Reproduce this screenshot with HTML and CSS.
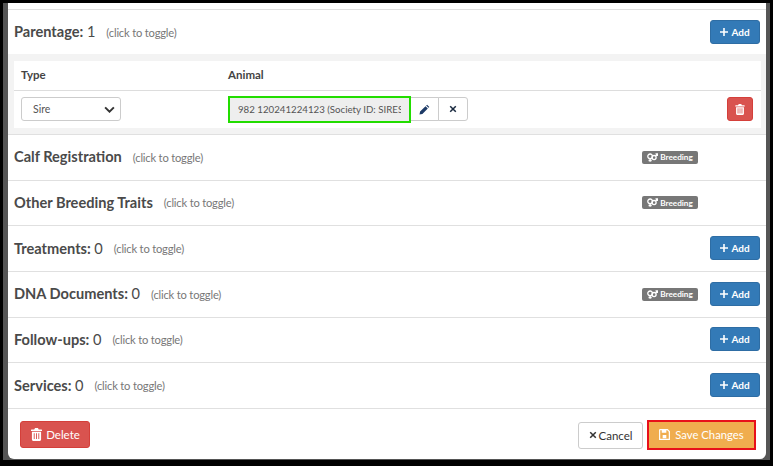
FILE: index.html
```html
<!DOCTYPE html>
<html lang="en">
<head>
<meta charset="utf-8">
<title>Animal record</title>
<link rel="stylesheet" href="styles.css">
</head>
<body>
<svg class="defs" width="0" height="0" aria-hidden="true">
  <symbol id="trash" viewBox="0 0 12 14"><path fill="currentColor" d="M4.400 0h3.200l.8 1.600H11.400c.4 0 .6.300.6.600v.9H0v-.9c0-.3.200-.6.600-.6h2.900zM1 4h10v8.500c0 .9-.6 1.500-1.400 1.500H2.400C1.600 14 1 13.400 1 12.500zm2 1.500v6.500h1V5.500zm2.500 0v6.500h1V5.500zm2.500 0v6.500h1V5.500z"/></symbol>
  <symbol id="plus" viewBox="0 0 10 10"><path fill="currentColor" d="M4 0h2v4h4v2H6v4H4V6H0V4h4z"/></symbol>
  <symbol id="times" viewBox="0 0 10 10"><path fill="none" stroke="currentColor" stroke-width="1.900" d="M1.500 1.500l7 7M8.500 1.500l-7 7"/></symbol>
  <symbol id="gender" viewBox="0 0 14 11"><g fill="none" stroke="currentColor" stroke-width="1.700"><circle cx="4" cy="4" r="3"/><path d="M4 7v4M2 9.300h4"/><circle cx="9" cy="5.500" r="2.600"/><path d="M10.800 3.700l2.500-2.500M10.800 .9h2.600v2.600"/></g></symbol>
</svg>
<div class="screen">
  <div class="backdrop">
    <main class="modal">
      <div class="sliver"></div>

      <section class="row row-first">
        <h4 class="title">Parentage: <span class="count">1</span></h4>
        <span class="hint">(click to toggle)</span>
        <button class="btn btn-add"><svg class="ico-plus"><use href="#plus"/></svg> Add</button>
      </section>

      <div class="collapse">
        <div class="panel">
          <div class="thead">
            <div class="col-type">Type</div>
            <div class="col-animal">Animal</div>
          </div>
          <div class="tbody">
            <div class="col-type">
              <div class="select">Sire
                <svg class="chev" viewBox="0 0 12 8"><path fill="none" stroke="currentColor" stroke-width="2.200" d="M1 1.500l5 5 5-5"/></svg>
              </div>
            </div>
            <div class="col-animal group">
              <div class="animal-input"><span class="animal-text">982 120241224123 (Society ID: SIRESIRE)</span></div>
              <button class="addon addon-edit">
                <svg class="ico-pencil" viewBox="0 0 12 12"><path fill="#1d3a66" d="M8.800.700l2.500 2.500-1 1-2.500-2.500zM7.100 2.400l2.500 2.500-5.900 5.900L.500 11.500l.700-3.200z"/></svg>
              </button>
              <button class="addon addon-x"><svg class="ico-times"><use href="#times"/></svg></button>
            </div>
            <button class="btn-trash"><svg class="ico-trash"><use href="#trash"/></svg></button>
          </div>
        </div>
      </div>

      <section class="row">
        <h4 class="title">Calf Registration</h4>
        <span class="hint">(click to toggle)</span>
        <span class="badge badge-solo"><svg class="ico-gender"><use href="#gender"/></svg>Breeding</span>
      </section>

      <section class="row">
        <h4 class="title">Other Breeding Traits</h4>
        <span class="hint">(click to toggle)</span>
        <span class="badge badge-solo"><svg class="ico-gender"><use href="#gender"/></svg>Breeding</span>
      </section>

      <section class="row">
        <h4 class="title">Treatments: <span class="count">0</span></h4>
        <span class="hint">(click to toggle)</span>
        <button class="btn btn-add"><svg class="ico-plus"><use href="#plus"/></svg> Add</button>
      </section>

      <section class="row">
        <h4 class="title">DNA Documents: <span class="count">0</span></h4>
        <span class="hint">(click to toggle)</span>
        <span class="badge"><svg class="ico-gender"><use href="#gender"/></svg>Breeding</span>
        <button class="btn btn-add"><svg class="ico-plus"><use href="#plus"/></svg> Add</button>
      </section>

      <section class="row">
        <h4 class="title">Follow-ups: <span class="count">0</span></h4>
        <span class="hint">(click to toggle)</span>
        <button class="btn btn-add"><svg class="ico-plus"><use href="#plus"/></svg> Add</button>
      </section>

      <section class="row">
        <h4 class="title">Services: <span class="count">0</span></h4>
        <span class="hint">(click to toggle)</span>
        <button class="btn btn-add"><svg class="ico-plus"><use href="#plus"/></svg> Add</button>
      </section>

      <footer class="footer">
        <button class="btn-delete"><svg class="ico-trash-sm"><use href="#trash"/></svg>Delete</button>
        <div class="footer-right">
          <button class="btn-cancel"><svg class="ico-times-sm"><use href="#times"/></svg>Cancel</button>
          <button class="btn-save">
            <svg class="ico-save" viewBox="0 0 12 12"><path fill="none" stroke="currentColor" stroke-width="1.300" d="M1.200.700h8l2.100 2.100v8.500H.700V1.200z"/><path fill="currentColor" d="M3 1h5v3H3zM4 6.500h4V10H4z"/></svg>Save Changes
          </button>
        </div>
      </footer>
    </main>
  </div>
</div>
</body>
</html>
```

FILE: styles.css
```css
* { box-sizing: border-box; }
html, body { margin: 0; padding: 0; }
body { background: #000; font-family: Lato, "Open Sans", sans-serif; color: #333; overflow: hidden; }
.defs { position: absolute; }
.screen { width: 773px; height: 466px; padding: 3px 3px 6px 3px; background: #000; }
.backdrop { height: 457px; background: #555; padding: 0 4px 1px 5px; }
.modal { height: 456px; background: #fff; border-radius: 0 0 6px 6px; display: flex; flex-direction: column; overflow: hidden; }
.sliver { height: 6px; flex: none; }

.row { height: 45.67px; flex: none; border-top: 1px solid #e0e0e0; display: flex; align-items: center; padding: 0 6px; font-size: 13px; }
.row-first { height: 45px; }
.title { margin: 0; font-size: 14.6px; font-weight: 700; color: #4a4a4a; line-height: 20px; white-space: pre; }
.count { font-weight: 400; }
.hint { margin-left: 11px; font-size: 11.2px; color: #777; letter-spacing: -.2px; }

.btn { font-family: inherit; border: 1px solid #2e6da4; background: #337ab7; color: #fff; border-radius: 3px; cursor: pointer; }
.btn-add { margin-left: auto; width: 50px; height: 24px; margin-top: -1px; padding: 0; font-size: 10px; font-weight: 700; display: flex; align-items: center; justify-content: center; gap: 3px; }
.row-first .btn-add { margin-top: 0; }
.ico-plus { width: 8px; height: 8px; }

.badge { margin-left: auto; width: 56px; height: 13px; border-radius: 2px; background: #777; color: #fff; font-size: 8.200px; font-weight: 700; display: flex; align-items: center; justify-content: center; gap: 2px; }
.badge + .btn-add { margin-left: 12px; }
.badge-solo { margin-right: 62px; }
.ico-gender { width: 11px; height: 9px; }

.collapse { height: 80px; flex: none; background: #f3f3f3; padding: 7px 5px 6px 6px; }
.panel { background: #fff; height: 67px; }
.thead { height: 30px; border-bottom: 1px solid #ddd; display: flex; align-items: center; padding-bottom: 2px; font-size: 11.500px; font-weight: 700; color: #444; }
.tbody { height: 36px; display: flex; align-items: center; }
.col-type { width: 214px; padding-left: 7px; flex: none; }
.col-animal { flex: none; }
.select { width: 100px; height: 24px; border: 1px solid #ccc; border-radius: 3px; display: flex; align-items: center; justify-content: space-between; padding: 0 5px 0 11px; font-size: 10.500px; color: #555; }
.chev { width: 11px; height: 7px; color: #333; }

.group { display: flex; align-items: center; height: 24px; }
.animal-input { width: 183px; height: 27px; background: #eee; border: 2px solid #22dd00; padding: 0 8px; font-size: 9.700px; color: #555; display: flex; align-items: center; overflow: hidden; }
.animal-text { white-space: nowrap; overflow: hidden; width: 100%; display: block; }
.addon { width: 30px; height: 24px; background: #fff; border: 1px solid #ccc; padding: 0; display: flex; align-items: center; justify-content: center; margin-left: -1px; }
.addon-edit { border-left: 0; width: 28px; margin-left: 0; }
.addon-x { border-radius: 0 3px 3px 0; }
.ico-pencil { width: 11px; height: 11px; }
.ico-times { width: 8px; height: 8px; color: #1a2a40; }
.btn-trash { margin-left: auto; margin-right: 8px; width: 26px; height: 24px; background: #d9534f; border: 1px solid #d43f3a; border-radius: 3px; padding: 0; display: flex; align-items: center; justify-content: center; color: #fff; }
.ico-trash { width: 10px; height: 11px; }

.footer { flex: 1; border-top: 1px solid #e0e0e0; display: flex; justify-content: space-between; align-items: flex-start; padding: 12px 10px 0 12px; }
.footer-right { display: flex; gap: 4px; align-items: center; }
.btn-delete { width: 70px; height: 27px; background: #d9534f; border: 1px solid #d43f3a; border-radius: 3px; color: #fff; font: 400 11.500px Lato, sans-serif; display: flex; align-items: center; justify-content: center; gap: 4px; padding: 0 0 0 1px; }
.ico-trash-sm { width: 11px; height: 13px; }
.btn-cancel { width: 65px; height: 27px; background: #fff; border: 1px solid #ccc; border-radius: 3px; color: #333; font: 400 11.500px Lato, sans-serif; display: flex; align-items: center; justify-content: center; gap: 2px; padding: 0; }
.ico-times-sm { width: 8px; height: 8px; }
.btn-save { width: 109px; height: 30px; margin-top: -1px; background: #f0ad4e; border: 2px solid #e8101a; color: #fff; font: 400 11.300px Lato, sans-serif; display: flex; align-items: center; justify-content: center; gap: 5px; padding: 0; }
.ico-save { width: 11px; height: 11px; }
```
